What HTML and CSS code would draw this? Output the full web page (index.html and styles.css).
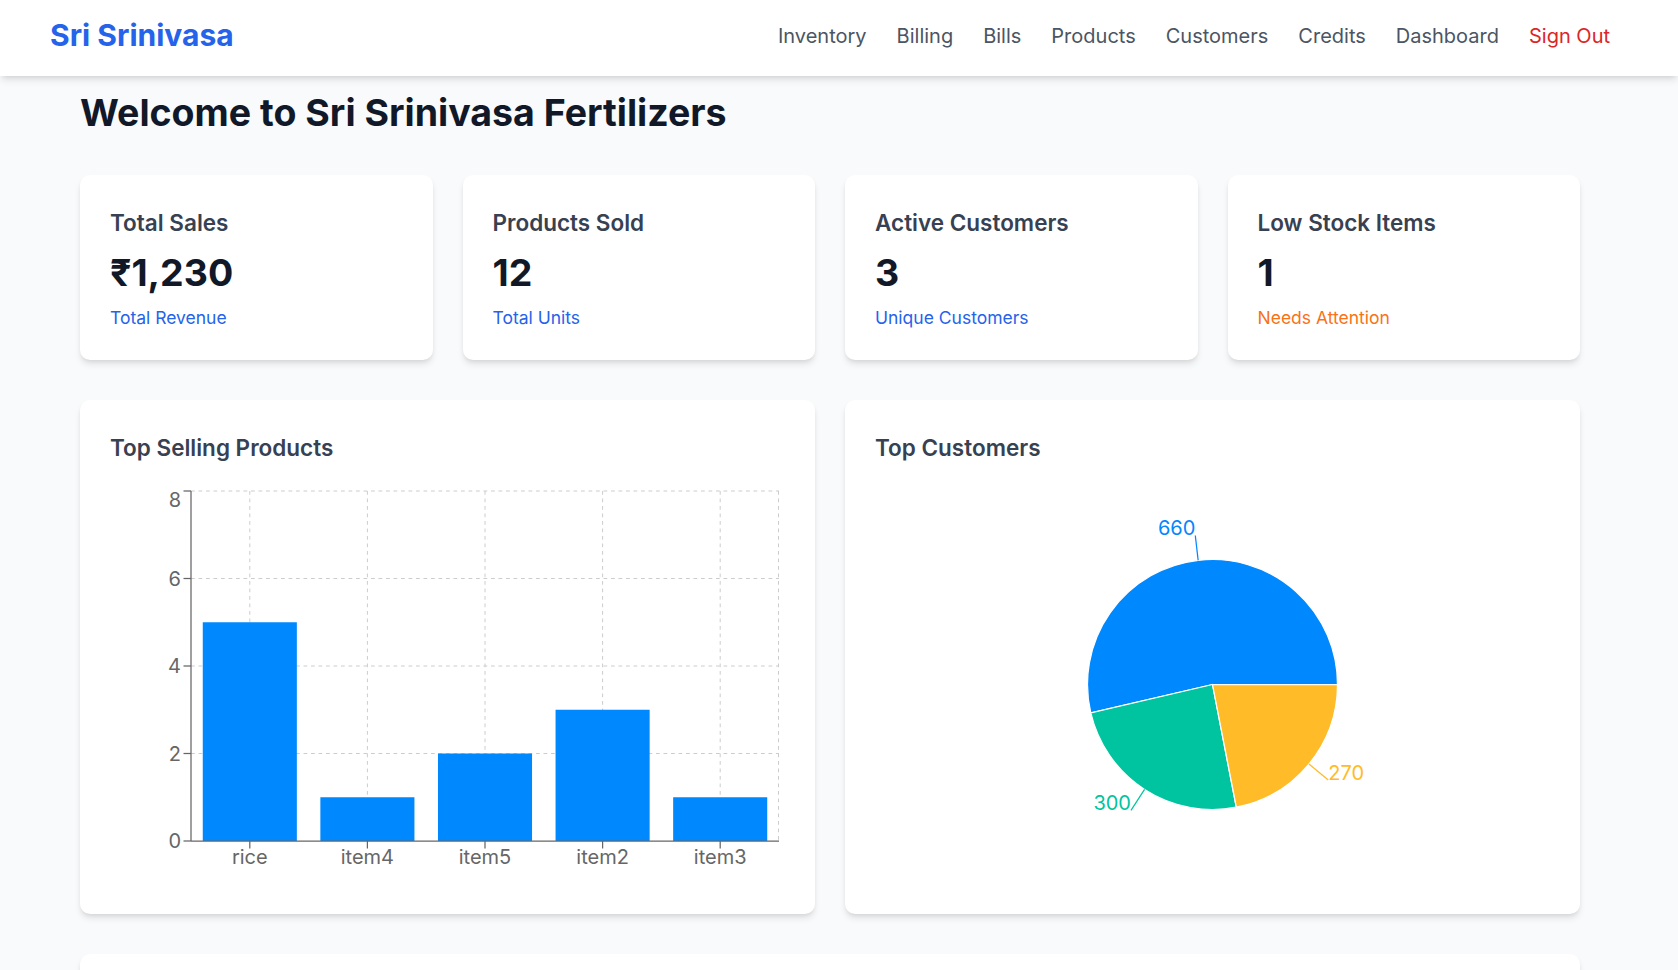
FILE: index.html
```html
<!DOCTYPE html>
<html lang="en">
<head>
<meta charset="utf-8">
<title>Sri Srinivasa Fertilizers</title>
<link rel="stylesheet" href="styles.css">
</head>
<body>
<nav class="navbar">
  <div class="logo">Sri Srinivasa</div>
  <div class="nav-links">
    <a class="nav-link">Inventory</a>
    <a class="nav-link">Billing</a>
    <a class="nav-link">Bills</a>
    <a class="nav-link">Products</a>
    <a class="nav-link">Customers</a>
    <a class="nav-link">Credits</a>
    <a class="nav-link">Dashboard</a>
    <a class="nav-link signout">Sign Out</a>
  </div>
</nav>
<main class="main">
  <h1 class="page-title">Welcome to Sri Srinivasa Fertilizers</h1>
  <section class="stats">
    <div class="card">
      <div class="card-title">Total Sales</div>
      <div class="stat-value">₹1,230</div>
      <div class="stat-sub">Total Revenue</div>
    </div>
    <div class="card">
      <div class="card-title">Products Sold</div>
      <div class="stat-value">12</div>
      <div class="stat-sub">Total Units</div>
    </div>
    <div class="card">
      <div class="card-title">Active Customers</div>
      <div class="stat-value">3</div>
      <div class="stat-sub">Unique Customers</div>
    </div>
    <div class="card">
      <div class="card-title">Low Stock Items</div>
      <div class="stat-value">1</div>
      <div class="stat-sub warn">Needs Attention</div>
    </div>
  </section>
  <section class="charts">
    <div class="card">
      <div class="card-title chart-title">Top Selling Products</div>
      <svg class="chart" width="674" height="399" viewBox="0 0 674 399">
        <g class="grid" stroke="#ccc" stroke-dasharray="3.75 3.75" fill="none">
          <line x1="81" y1="6" x2="669" y2="6"/>
          <line x1="81" y1="93.5" x2="669" y2="93.5"/>
          <line x1="81" y1="181" x2="669" y2="181"/>
          <line x1="81" y1="268.5" x2="669" y2="268.5"/>
          <line x1="139.8" y1="6" x2="139.8" y2="356"/>
          <line x1="257.4" y1="6" x2="257.4" y2="356"/>
          <line x1="375" y1="6" x2="375" y2="356"/>
          <line x1="492.6" y1="6" x2="492.6" y2="356"/>
          <line x1="610.2" y1="6" x2="610.2" y2="356"/>
          <line x1="668.5" y1="6" x2="668.5" y2="356"/>
        </g>
        <g fill="#0088FE">
          <rect x="92.76" y="137.25" width="94.08" height="218.75"/>
          <rect x="210.36" y="312.25" width="94.08" height="43.75"/>
          <rect x="327.96" y="268.5" width="94.08" height="87.5"/>
          <rect x="445.56" y="224.75" width="94.08" height="131.25"/>
          <rect x="563.16" y="312.25" width="94.08" height="43.75"/>
        </g>
        <g stroke="#666" stroke-width="1.25" fill="none">
          <line x1="81" y1="6" x2="81" y2="356"/>
          <line x1="81" y1="356" x2="669" y2="356"/>
          <line x1="73.5" y1="6" x2="81" y2="6"/>
          <line x1="73.5" y1="93.5" x2="81" y2="93.5"/>
          <line x1="73.5" y1="181" x2="81" y2="181"/>
          <line x1="73.5" y1="268.5" x2="81" y2="268.5"/>
          <line x1="73.5" y1="356" x2="81" y2="356"/>
          <line x1="139.8" y1="356" x2="139.8" y2="363.5"/>
          <line x1="257.4" y1="356" x2="257.4" y2="363.5"/>
          <line x1="375" y1="356" x2="375" y2="363.5"/>
          <line x1="492.6" y1="356" x2="492.6" y2="363.5"/>
          <line x1="610.2" y1="356" x2="610.2" y2="363.5"/>
        </g>
        <g class="tick" text-anchor="end">
          <text x="71" y="22">8</text>
          <text x="71" y="93.5" dy="0.355em">6</text>
          <text x="71" y="181" dy="0.355em">4</text>
          <text x="71" y="268.5" dy="0.355em">2</text>
          <text x="71" y="356" dy="0.355em">0</text>
        </g>
        <g class="tick" text-anchor="middle">
          <text x="139.8" y="365" dy="0.71em">rice</text>
          <text x="257.4" y="365" dy="0.71em">item4</text>
          <text x="375" y="365" dy="0.71em">item5</text>
          <text x="492.6" y="365" dy="0.71em">item2</text>
          <text x="610.2" y="365" dy="0.71em">item3</text>
        </g>
      </svg>
    </div>
    <div class="card">
      <div class="card-title chart-title">Top Customers</div>
      <svg class="chart" width="675" height="399" viewBox="0 0 675 399">
        <g stroke="#fff" stroke-width="1.25">
          <path fill="#0088FE" d="M337.5 199.5 L462.5 199.5 A125 125 0 1 0 215.79 227.98 Z"/>
          <path fill="#00C49F" d="M337.5 199.5 L215.79 227.98 A125 125 0 0 0 361.31 322.21 Z"/>
          <path fill="#FFBB28" d="M337.5 199.5 L361.31 322.21 A125 125 0 0 0 462.5 199.5 Z"/>
        </g>
        <g fill="none" stroke-width="1.25">
          <line stroke="#0088FE" x1="323.16" y1="75.32" x2="320.3" y2="50.49"/>
          <line stroke="#00C49F" x1="269.57" y1="304.43" x2="255.99" y2="325.42"/>
          <line stroke="#FFBB28" x1="433.95" y1="279.01" x2="453.24" y2="294.91"/>
        </g>
        <g class="pie-label">
          <text x="320.3" y="50.49" text-anchor="end" fill="#0088FE">660</text>
          <text x="255.99" y="325.42" text-anchor="end" fill="#00C49F">300</text>
          <text x="453.24" y="294.91" text-anchor="start" fill="#FFBB28">270</text>
        </g>
      </svg>
    </div>
  </section>
  <section class="card wide-card"></section>
</main>
</body>
</html>
```

FILE: styles.css
```css
* { box-sizing: border-box; }

body {
  margin: 0;
  background: #f9fafb;
  font-family: Inter, "Noto Sans", sans-serif;
}

.navbar {
  height: 76px;
  background: #fff;
  box-shadow: 0 5px 7.5px -1.25px rgba(0, 0, 0, 0.1), 0 2.5px 5px -2.5px rgba(0, 0, 0, 0.1);
  display: flex;
  align-items: center;
  justify-content: space-between;
  padding: 0 68px 4px 50px;
  position: relative;
  z-index: 1;
}

.logo {
  font-size: 30px;
  line-height: 37.5px;
  font-weight: 700;
  color: #2563eb;
}

.nav-links {
  display: flex;
  gap: 30px;
}

.nav-link {
  font-size: 20px;
  line-height: 30px;
  color: #4b5563;
}

.nav-link.signout {
  color: #dc2626;
}

.main {
  padding: 14px 98px 0 80px;
}

.page-title {
  margin: 0 0 40px;
  font-size: 37.5px;
  line-height: 45px;
  font-weight: 700;
  color: #111827;
}

.card {
  background: #fff;
  border-radius: 10px;
  padding: 30px;
  box-shadow: 0 5px 7.5px -1.25px rgba(0, 0, 0, 0.1), 0 2.5px 5px -2.5px rgba(0, 0, 0, 0.1);
}

.stats {
  display: grid;
  grid-template-columns: repeat(4, 1fr);
  gap: 30px;
  margin-bottom: 40px;
}

.card-title {
  font-size: 22.5px;
  line-height: 35px;
  font-weight: 600;
  color: #374151;
}

.stat-value {
  margin-top: 10px;
  font-size: 37.5px;
  line-height: 45px;
  font-weight: 700;
  color: #111827;
}

.stat-sub {
  margin-top: 10px;
  font-size: 17.5px;
  line-height: 25px;
  color: #2563eb;
}

.stat-sub.warn {
  color: #f97316;
}

.charts {
  display: grid;
  grid-template-columns: 1fr 1fr;
  gap: 30px;
  margin-bottom: 40px;
}

.chart-title {
  margin-bottom: 20px;
}

.chart {
  display: block;
}

.tick text {
  font-family: Inter, "Noto Sans", sans-serif;
  font-size: 20px;
  fill: #666;
}

.pie-label text {
  font-family: Inter, "Noto Sans", sans-serif;
  font-size: 20px;
}

.wide-card {
  height: 300px;
}
```
